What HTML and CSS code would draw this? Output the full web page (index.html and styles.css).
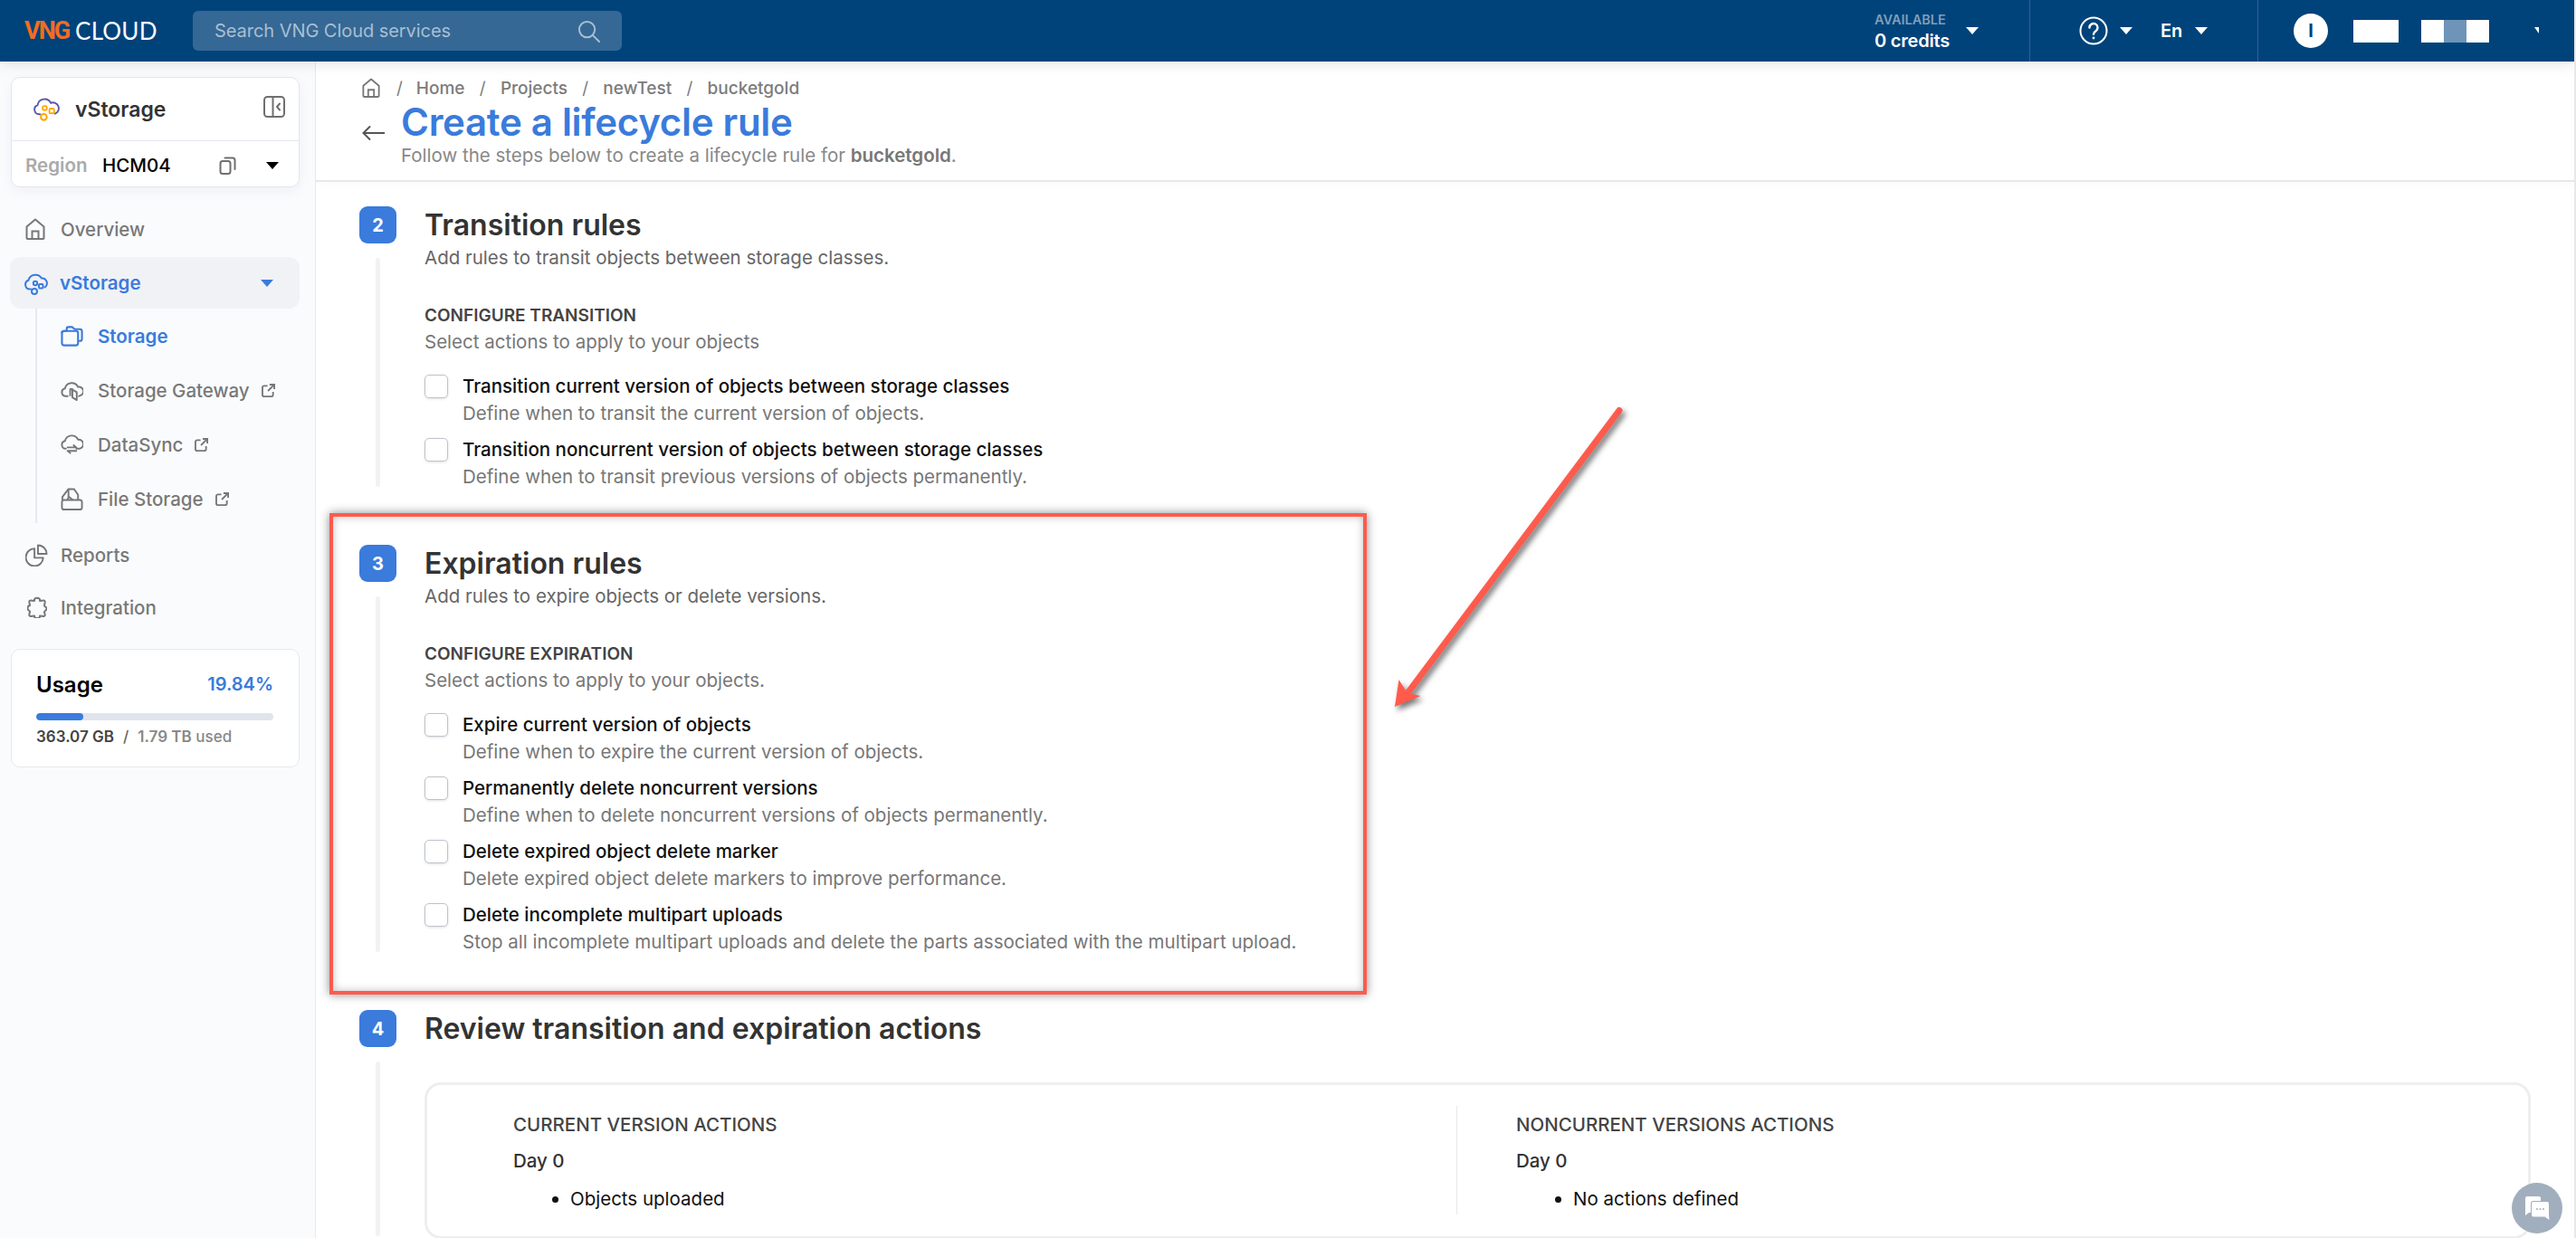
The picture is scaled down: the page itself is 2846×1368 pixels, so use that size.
FILE: index.html
```html
<!DOCTYPE html>
<html lang="en">
<head>
<meta charset="utf-8">
<title>Create a lifecycle rule</title>
<link rel="stylesheet" href="styles.css">
</head>
<body>
<header class="topbar">
  <div class="logo"><span class="logo-vng">VNG</span><span class="logo-cloud">CLOUD</span></div>
  <div class="search">
    <span>Search VNG Cloud services</span>
    <svg class="search-icon" viewBox="0 0 26 26" fill="none" stroke="#a9bfd2" stroke-width="2"><circle cx="11" cy="11" r="9"/><path d="M18 18l7 7" stroke-linecap="round"/></svg>
  </div>
  <div class="top-right">
    <div class="credits">
      <div class="credit-text"><div class="avail">AVAILABLE</div><div class="credit-val">0 credits</div></div>
      <i class="caret caret-white"></i>
    </div>
    <div class="help-lang">
      <svg class="help" viewBox="0 0 32 32" fill="none" stroke="#fff" stroke-width="2"><circle cx="16" cy="16" r="14.5"/><path d="M11.5 12.5a4.5 4.5 0 1 1 7 3.7c-1.6 1-2.5 1.9-2.5 3.6" stroke-linecap="round" stroke-width="2.4"/><circle cx="16" cy="24" r="1.4" fill="#fff" stroke="none"/></svg>
      <i class="caret caret-white"></i>
      <span class="lang">En</span>
      <i class="caret caret-white"></i>
    </div>
    <div class="user">
      <div class="avatar">I</div>
      <div class="redact r1"></div>
      <div class="redact-group"><b></b><b class="mid"></b><b></b></div>
      <i class="tiny"></i>
    </div>
  </div>
</header>

<div class="app">
  <aside class="sidebar">
    <div class="svc-card">
      <div class="svc-head">
        <svg class="svc-logo" viewBox="0 0 28 28" fill="none" stroke-width="1.8"><path d="M7 19.5H6a5 5 0 0 1-1.6-9.7A7.5 7.5 0 0 1 18.5 7.5 5.5 5.5 0 0 1 23 19" stroke="#5b57a6" stroke-linecap="round"/><circle cx="12" cy="13" r="2.3" stroke="#ffa800"/><rect x="17" y="13.5" width="5" height="5" rx="1" stroke="#ffa800"/><circle cx="11" cy="22.5" r="3.2" stroke="#ffa800" stroke-width="2"/></svg>
        <span class="svc-name">vStorage</span>
        <svg class="panel-icon" viewBox="0 0 24 24" fill="none" stroke="#6f6f6f" stroke-width="2"><rect x="1" y="1" width="22" height="22" rx="3.5"/><path d="M10.5 1v22"/><path d="M18 8.5L15 12l3 3.5" stroke-linecap="round" stroke-linejoin="round"/></svg>
      </div>
      <div class="svc-region">
        <span class="region-label">Region</span>
        <span class="region-val">HCM04</span>
        <svg class="copy-icon" viewBox="0 0 18 20" fill="none" stroke="#6f6f6f" stroke-width="2"><rect x="1" y="5" width="11" height="14" rx="2.5"/><path d="M6 1.5 h8.5a2.5 2.5 0 0 1 2.5 2.5v10" stroke-linecap="round"/></svg>
        <i class="caret caret-black"></i>
      </div>
    </div>

    <nav class="nav">
      <a class="nav-item ov">
        <svg class="nav-icon" viewBox="0 0 22 24" fill="none" stroke="#777" stroke-width="2"><path d="M1.5 9.5L11 1.5l9.5 8V22a1 1 0 0 1-1 1h-17a1 1 0 0 1-1-1z" stroke-linejoin="round"/><path d="M7.5 23v-8.500h7V23"/></svg>
        <span>Overview</span>
      </a>
      <a class="nav-item active">
        <svg class="nav-icon" viewBox="0 0 26 28" fill="none" stroke="#3a7bdc" stroke-width="2"><path d="M7 20.5H6a5 5 0 0 1-1.600-9.700A8 8 0 0 1 19 8.500a5.500 5.500 0 0 1 3.500 10" stroke-linecap="round"/><circle cx="12" cy="14" r="2.2"/><rect x="16" y="15" width="4.500" height="4.500" rx="1"/><circle cx="11" cy="23" r="3"/></svg>
        <span>vStorage</span>
        <i class="caret caret-blue"></i>
      </a>
      <div class="subnav">
        <a class="sub-item sub-active">
          <svg class="sub-icon" viewBox="0 0 26 24" fill="none" stroke="#3a7bdc" stroke-width="2.2"><rect x="1.500" y="6" width="18.500" height="16.500" rx="2.500"/><path d="M1.500 8.500V7a2 2 0 0 1 2-1H7" stroke-linejoin="round"/><path d="M7 6V3a1.500 1.500 0 0 1 1.500-1.500h5L16 4h6a2.500 2.500 0 0 1 2.500 2.500v8.500a2.500 2.500 0 0 1-2.500 2.500h-2" stroke-linejoin="round"/></svg>
          <span>Storage</span>
        </a>
        <a class="sub-item">
          <svg class="sub-icon" viewBox="0 0 26 24" fill="none" stroke="#777" stroke-width="2"><path d="M8 18.500H6a4.500 4.500 0 0 1-1-8.900A8 8 0 0 1 20 8a5 5 0 0 1 3 9.500l-2 1" stroke-linecap="round"/><path d="M11 18.500V10.500h2.500v8M13.500 11l5 3V23l-5-3z" stroke-linejoin="round"/></svg>
          <span>Storage Gateway</span>
          <svg class="ext" viewBox="0 0 16 16" fill="none" stroke="#777" stroke-width="2"><path d="M7 2.500H3a2 2 0 0 0-2 2V13a2 2 0 0 0 2 2h8.500a2 2 0 0 0 2-2V9.500"/><path d="M7.500 8.500L14.500 1.500M9.500 1h5.500v5.500"/></svg>
        </a>
        <a class="sub-item">
          <svg class="sub-icon" viewBox="0 0 26 24" fill="none" stroke="#777" stroke-width="2"><path d="M6 16.500a4.500 4.500 0 0 1-1-8.900A8 8 0 0 1 20 6a5 5 0 0 1 1.500 10.500H18" stroke-linecap="round"/><path d="M8 15h10l-3-2.500M18 19H8l3 2.500" stroke-linecap="round" stroke-linejoin="round"/></svg>
          <span>DataSync</span>
          <svg class="ext" viewBox="0 0 16 16" fill="none" stroke="#777" stroke-width="2"><path d="M7 2.500H3a2 2 0 0 0-2 2V13a2 2 0 0 0 2 2h8.500a2 2 0 0 0 2-2V9.500"/><path d="M7.500 8.500L14.500 1.500M9.500 1h5.500v5.500"/></svg>
        </a>
        <a class="sub-item">
          <svg class="sub-icon" viewBox="0 0 26 26" fill="none" stroke="#777" stroke-width="2"><path d="M2 14V10.500L9 1.500h6.500L20 8v6" stroke-linejoin="round"/><path d="M9 1.500v9.500l-1 3M9.500 10.500L14 14" stroke-linejoin="round"/><rect x="1.500" y="14" width="23" height="11" rx="2.500"/></svg>
          <span>File Storage</span>
          <svg class="ext" viewBox="0 0 16 16" fill="none" stroke="#777" stroke-width="2"><path d="M7 2.500H3a2 2 0 0 0-2 2V13a2 2 0 0 0 2 2h8.500a2 2 0 0 0 2-2V9.500"/><path d="M7.500 8.500L14.500 1.500M9.500 1h5.500v5.500"/></svg>
        </a>
      </div>
      <a class="nav-item rep">
        <svg class="nav-icon" viewBox="0 0 26 26" fill="none" stroke="#777" stroke-width="2"><path d="M10.500 5.500a10 10 0 1 0 10 10.500H10.500z" stroke-linejoin="round"/><path d="M14.500 1.500a10 10 0 0 1 10 10h-10z" stroke-linejoin="round"/></svg>
        <span>Reports</span>
      </a>
      <a class="nav-item int">
        <svg class="nav-icon" viewBox="0 0 22 24" fill="none" stroke="#777" stroke-width="2"><path d="M8 5c-1.200-4.500 7.200-4.500 6 0l4-.5a1.500 1.500 0 0 1 1.700 1.700L19 10c-.5 1.500 2.500 1 2.500 3.500S18.500 16 19 17.500l.7 2.800a1.500 1.500 0 0 1-1.700 1.700l-4-.5c1.200 3.500-7.200 3.500-6 0l-4 .5a1.500 1.500 0 0 1-1.700-1.700l.7-3.300C3.500 16 .5 16 .5 13S3.500 10 3 10l-.7-3.800A1.500 1.500 0 0 1 4 4.500z" stroke-linejoin="round"/></svg>
        <span>Integration</span>
      </a>
    </nav>

    <div class="usage">
      <div class="usage-top"><span class="usage-title">Usage</span><span class="usage-pct">19.84%</span></div>
      <div class="bar"><div class="bar-fill" style="width:19.84%"></div></div>
      <div class="usage-text"><b>363.07 GB</b><span class="slash">/</span><b class="muted">1.79 TB</b> <span class="used">used</span></div>
    </div>
  </aside>

  <main class="main">
    <section class="page-head">
      <div class="crumbs">
        <svg class="crumb-home" viewBox="0 0 22 24" fill="none" stroke="#777" stroke-width="2"><path d="M1.500 9.500L11 1.500l9.500 8V22a1 1 0 0 1-1 1h-17a1 1 0 0 1-1-1z" stroke-linejoin="round"/><path d="M7.500 23v-8.500h7V23"/></svg>
        <span class="sep">/</span><span>Home</span>
        <span class="sep">/</span><span>Projects</span>
        <span class="sep">/</span><span>newTest</span>
        <span class="sep">/</span><span>bucketgold</span>
      </div>
      <div class="title-row">
        <svg class="back" viewBox="0 0 26 20" fill="none" stroke="#555" stroke-width="2"><path d="M25 10H2M9 2.500L1.500 10 9 17.500"/></svg>
        <div>
          <h1>Create a lifecycle rule</h1>
          <p class="head-sub">Follow the steps below to create a lifecycle rule for <b>bucketgold</b>.</p>
        </div>
      </div>
    </section>

    <div class="steps">
      <section class="step">
        <div class="rail"><div class="badge">2</div><div class="line"></div></div>
        <div class="step-body">
          <h2>Transition rules</h2>
          <p class="step-sub">Add rules to transit objects between storage classes.</p>
          <h3>CONFIGURE TRANSITION</h3>
          <p class="select">Select actions to apply to your objects</p>
          <div class="options">
            <div class="opt"><i class="check"></i><div><div class="opt-label">Transition current version of objects between storage classes</div><div class="opt-desc">Define when to transit the current version of objects.</div></div></div>
            <div class="opt"><i class="check"></i><div><div class="opt-label">Transition noncurrent version of objects between storage classes</div><div class="opt-desc">Define when to transit previous versions of objects permanently.</div></div></div>
          </div>
        </div>
      </section>

      <section class="step">
        <div class="rail"><div class="badge">3</div><div class="line"></div></div>
        <div class="step-body">
          <h2>Expiration rules</h2>
          <p class="step-sub">Add rules to expire objects or delete versions.</p>
          <h3>CONFIGURE EXPIRATION</h3>
          <p class="select">Select actions to apply to your objects.</p>
          <div class="options">
            <div class="opt"><i class="check"></i><div><div class="opt-label">Expire current version of objects</div><div class="opt-desc">Define when to expire the current version of objects.</div></div></div>
            <div class="opt"><i class="check"></i><div><div class="opt-label">Permanently delete noncurrent versions</div><div class="opt-desc">Define when to delete noncurrent versions of objects permanently.</div></div></div>
            <div class="opt"><i class="check"></i><div><div class="opt-label">Delete expired object delete marker</div><div class="opt-desc">Delete expired object delete markers to improve performance.</div></div></div>
            <div class="opt"><i class="check"></i><div><div class="opt-label">Delete incomplete multipart uploads</div><div class="opt-desc">Stop all incomplete multipart uploads and delete the parts associated with the multipart upload.</div></div></div>
          </div>
        </div>
      </section>

      <section class="step">
        <div class="rail"><div class="badge">4</div><div class="line"></div></div>
        <div class="step-body">
          <h2>Review transition and expiration actions</h2>
          <div class="review">
            <div class="rev-col">
              <h4>CURRENT VERSION ACTIONS</h4>
              <div class="day">Day 0</div>
              <ul><li>Objects uploaded</li></ul>
            </div>
            <div class="rev-col rev-right">
              <h4>NONCURRENT VERSIONS ACTIONS</h4>
              <div class="day">Day 0</div>
              <ul><li>No actions defined</li></ul>
            </div>
          </div>
        </div>
      </section>
    </div>
  </main>
</div>

<div class="anno-rect"></div>
<svg class="anno-arrow" viewBox="0 0 270 350" fill="none">
  <path d="M249 3.500L12 320" stroke="#ff5b4d" stroke-width="7" stroke-linecap="round"/>
  <path d="M1 331L5.500 301 15 316 29.500 319z" fill="#ff5b4d"/>
</svg>
<div class="chat">
  <svg viewBox="0 0 30 30"><path d="M2 4a2 2 0 0 1 2-2h13a2 2 0 0 1 2 2v3H11a3 3 0 0 0-3 3v10H6l-4 3z" fill="#fff"/><path d="M9 10a2 2 0 0 1 2-2h15a2 2 0 0 1 2 2v13l.5 5-5-3.500H11a2 2 0 0 1-2-2z" fill="#fff"/><g fill="#a1aebd"><circle cx="15" cy="16" r="1"/><circle cx="18.500" cy="16" r="1"/><circle cx="22" cy="16" r="1"/></g></svg>
</div>
</body>
</html>
```

FILE: styles.css
```css
* { box-sizing: border-box; }
html, body { margin: 0; height: 100%; overflow: hidden; }
body { font-family: Inter, "Noto Sans", sans-serif; color: #333; background: #fff; position: relative; border-right: 2px solid #e8e8e8; }
h1, h2, h3, h4, p, ul { margin: 0; padding: 0; }

/* top bar */
.topbar { height: 68px; background: #00437a; display: flex; align-items: center; position: relative; z-index: 2; box-shadow: 0 3px 14px rgba(0,0,0,.1); }
.logo { width: 213px; padding-left: 27px; display: flex; align-items: center; line-height: 1; }
.logo-vng { color: #f26c22; font: 700 27px Roboto, sans-serif; letter-spacing: -2px; }
.logo-cloud { color: #fff; font: 400 26px Lato, sans-serif; letter-spacing: .2px; margin-left: 7px; }
.search { width: 474px; height: 44px; background: #356895; border-radius: 6px; display: flex; align-items: center; justify-content: space-between; padding: 0 24px 0 24px; color: #a9bfd2; font-size: 20px; }
.search span { letter-spacing: -.05px; }
.search-icon { width: 25px; height: 25px; }
.top-right { flex: 1; display: flex; height: 68px; color: #fff; justify-content: flex-end; }
.caret { display: block; width: 0; height: 0; border-left: 7px solid transparent; border-right: 7px solid transparent; border-top: 8px solid #fff; }
.caret-white { border-top-color: #fff; }
.caret-black { border-top-color: #000; }
.caret-blue { border-top-color: #3a7bdc; }
.credits { width: 171px; display: flex; align-items: flex-start; }
.credit-text { padding-top: 13px; width: 101px; }
.avail { font-size: 14.5px; font-weight: 600; line-height: 18px; color: #7f9fbb; }
.credit-val { font-size: 20px; font-weight: 600; line-height: 26px; margin-top: 1px; letter-spacing: -.2px; }
.credits .caret { margin-top: 30px; }
.help-lang { width: 253px; border-left: 1px solid #2b6392; border-right: 1px solid #2b6392; display: flex; align-items: center; padding-left: 54px; }
.help { width: 32px; height: 32px; margin-right: 13px; }
.lang { font-size: 20px; font-weight: 600; margin: 0 14px 0 31px; }
.user { width: 349px; display: flex; align-items: center; padding-left: 39px; }
.avatar { width: 38px; height: 38px; border-radius: 50%; background: #fff; color: #00437a; font-weight: 700; font-size: 20px; display: flex; align-items: center; justify-content: center; }
.redact { width: 50px; height: 25px; background: #fff; }
.r1 { margin-left: 28px; }
.redact-group { display: flex; margin-left: 25px; }
.redact-group b { display: block; width: 25px; height: 25px; background: #fff; }
.redact-group .mid { background: #6e94b8; }
.tiny { display: block; width: 0; height: 0; border-top: 7px solid #fff; border-left: 5px solid transparent; margin-left: 50px; margin-bottom: 2px; }

.app { display: flex; height: 1300px; }

/* sidebar */
.sidebar { width: 349px; flex: none; background: #fafbfd; border-right: 1px solid #e6e9ef; padding: 17px 17px 0 12px; }
.svc-card { width: 319px; height: 122px; background: #fff; border: 1px solid #e3e6ef; border-radius: 10px; box-shadow: 0 4px 14px rgba(30,40,70,.05); }
.svc-head { height: 70px; display: flex; align-items: center; border-bottom: 1px solid #e3e6ef; padding: 0 15px 0 24px; }
.svc-logo { width: 29px; height: 29px; }
.svc-name { font-size: 23px; font-weight: 600; color: #333; margin-left: 17px; flex: 1; }
.panel-icon { width: 24px; height: 24px; margin-top: -6px; }
.svc-region { height: 50px; display: flex; align-items: center; padding: 3px 0 0 15px; }
.region-label { font-size: 20.5px; font-weight: 600; color: #aaa; width: 85px; }
.region-val { font-size: 20.5px; font-weight: 500; color: #000; width: 129px; }
.copy-icon { width: 19px; height: 20px; }
.svc-region .caret { margin-left: 33px; }

.nav { margin-top: 0; }
.nav-item { display: flex; align-items: center; height: 58px; font-size: 20.5px; font-weight: 500; color: #787878; border-radius: 12px; width: 320px; margin-left: -1px; padding-left: 17px; }
.nav-item span { margin-left: 17px; }
.nav-icon { width: 22px; height: 24px; flex: none; }
.ov { margin-top: 17px; }
.active { height: 57px; margin-top: 2px; background: #f0f2f6; color: #3a7bdc; font-weight: 600; padding-left: 16px; }
.active .nav-icon { width: 26px; height: 28px; }
.active span { margin-left: 13px; flex: 1; }
.active .caret { margin-right: 29px; }
.subnav { margin-left: 27px; border-left: 2px solid #e6e9ef; height: 237px; padding: 0 0 0 26px; }
.sub-item { display: flex; align-items: center; height: 60px; font-size: 20.5px; font-weight: 500; color: #787878; }
.sub-icon { width: 25px; height: 25px; flex: none; margin-right: 16px; }
.sub-active { color: #3a7bdc; font-weight: 600; }
.ext { width: 15px; height: 15px; margin-left: 13px; }
.rep { height: 58px; margin-top: 6px; }
.rep .nav-icon { width: 25px; height: 25px; }
.rep span { margin-left: 14px; }
.int .nav-icon { width: 22px; height: 24px; margin-left: 2px; }
.int span { margin-left: 15px; }

.usage { width: 319px; height: 131px; margin-top: 17px; background: #fff; border: 1px solid #e5e8ef; border-radius: 10px; padding: 19px 28px 0 27px; }
.usage-top { display: flex; justify-content: space-between; align-items: center; height: 38px; }
.usage-title { font-size: 24px; font-weight: 600; color: #000; }
.usage-pct { font-size: 20px; font-weight: 600; color: #3a7bdc; }
.bar { height: 8px; border-radius: 4px; background: #e0e4ec; margin-top: 13px; overflow: hidden; width: 262px; }
.bar-fill { height: 100%; background: #3a7bdc; border-radius: 4px; }
.usage-text { font-size: 17px; font-weight: 500; color: #888; margin-top: 8px; line-height: 20px; white-space: nowrap; }
.usage-text b { font-weight: 600; color: #444; }
.usage-text b.muted { color: #888; }
.slash { margin: 0 10px; color: #666; }

/* main */
.main { flex: 1; min-width: 0; }
.page-head { height: 133px; border-bottom: 2px solid #e8e8e8; padding: 17px 0 0 51px; box-shadow: 0 4px 10px rgba(0,0,0,.015); }
.crumbs { display: flex; align-items: center; height: 24px; font-size: 19px; font-weight: 500; color: #7c7c7c; }
.crumb-home { width: 20px; height: 22px; }
.sep { margin: 0 16.250px; font-weight: 400; }
.crumbs .sep:first-of-type { margin-left: 18px; margin-right: 15px; }
.title-row { display: flex; }
.back { width: 26px; height: 20px; margin-top: 28px; margin-right: 17px; flex: none; }
h1 { font-size: 42px; font-weight: 600; line-height: 52px; color: #3a7bdc; letter-spacing: -.3px; }
.head-sub { font-size: 20.5px; line-height: 26px; color: #888; margin-top: -2px; }
.head-sub b { font-weight: 600; color: #777; }

.steps { padding: 27px 48px 0 48px; }
.step { display: grid; grid-template-columns: 41px 1fr; column-gap: 31px; margin-bottom: 61px; }
.rail { display: flex; flex-direction: column; }
.badge { width: 41px; height: 41px; border-radius: 9px; background: #3a7bdc; color: #fff; font-size: 20px; font-weight: 700; display: flex; align-items: center; justify-content: center; flex: none; }
.line { flex: 1; width: 5px; background: #f2f2f2; border-radius: 3px; margin: 16px 0 3px 18px; }
h2 { font-size: 32px; font-weight: 600; line-height: 41px; color: #333; }
.step-sub { font-size: 20.5px; line-height: 30px; color: #666; margin-top: 1px; }
h3 { font-size: 19px; font-weight: 600; line-height: 24px; color: #444; margin-top: 37px; }
.select { font-size: 20.5px; line-height: 28px; color: #777; margin-top: 3px; }
.options { margin-top: 22px; display: flex; flex-direction: column; gap: 13px; }
.opt { display: flex; gap: 16px; }
.check { display: block; width: 26px; height: 26px; flex: none; background: #fff; border: 1px solid #bfc3ca; border-radius: 5px; box-shadow: 0 1px 3px rgba(0,0,0,.12); }
.opt-label { font-size: 20.5px; font-weight: 500; line-height: 26px; color: #111; }
.opt-desc { font-size: 20.5px; line-height: 28px; color: #777; margin-top: 3px; }

.review { margin-top: 39px; height: 173px; border: 3px solid #eee; border-radius: 18px; display: flex; padding: 23px 0 0 95px; }
.rev-col { height: 120px; }
.rev-col:first-child { width: 1043px; border-right: 1px solid #e8e8e8; }
.rev-right { padding-left: 65px; }
h4 { font-size: 20.5px; font-weight: 500; line-height: 26px; color: #444; }
.rev-col h4 { margin-top: 8px; }
.day { font-size: 20.5px; font-weight: 500; line-height: 28px; color: #333; margin-top: 13px; }
.rev-col ul { list-style: disc; margin: 15px 0 0 63px; font-size: 20.5px; line-height: 26px; color: #111; }

/* annotation overlays */
.anno-rect { position: absolute; left: 364px; top: 567px; width: 1146px; height: 532px; border: 4px solid #ff5b4d; box-shadow: 0 0 10px rgba(0,0,0,.45), inset 0 0 10px rgba(0,0,0,.25); pointer-events: none; }
.anno-arrow { position: absolute; left: 1540px; top: 450px; width: 270px; height: 350px; filter: drop-shadow(3px 4px 3px rgba(0,0,0,.55)); overflow: visible; }
.chat { position: absolute; left: 2775px; top: 1307px; width: 56px; height: 56px; border-radius: 50%; background: #a1aebd; display: flex; align-items: center; justify-content: center; }
.chat svg { width: 30px; height: 30px; }
```
